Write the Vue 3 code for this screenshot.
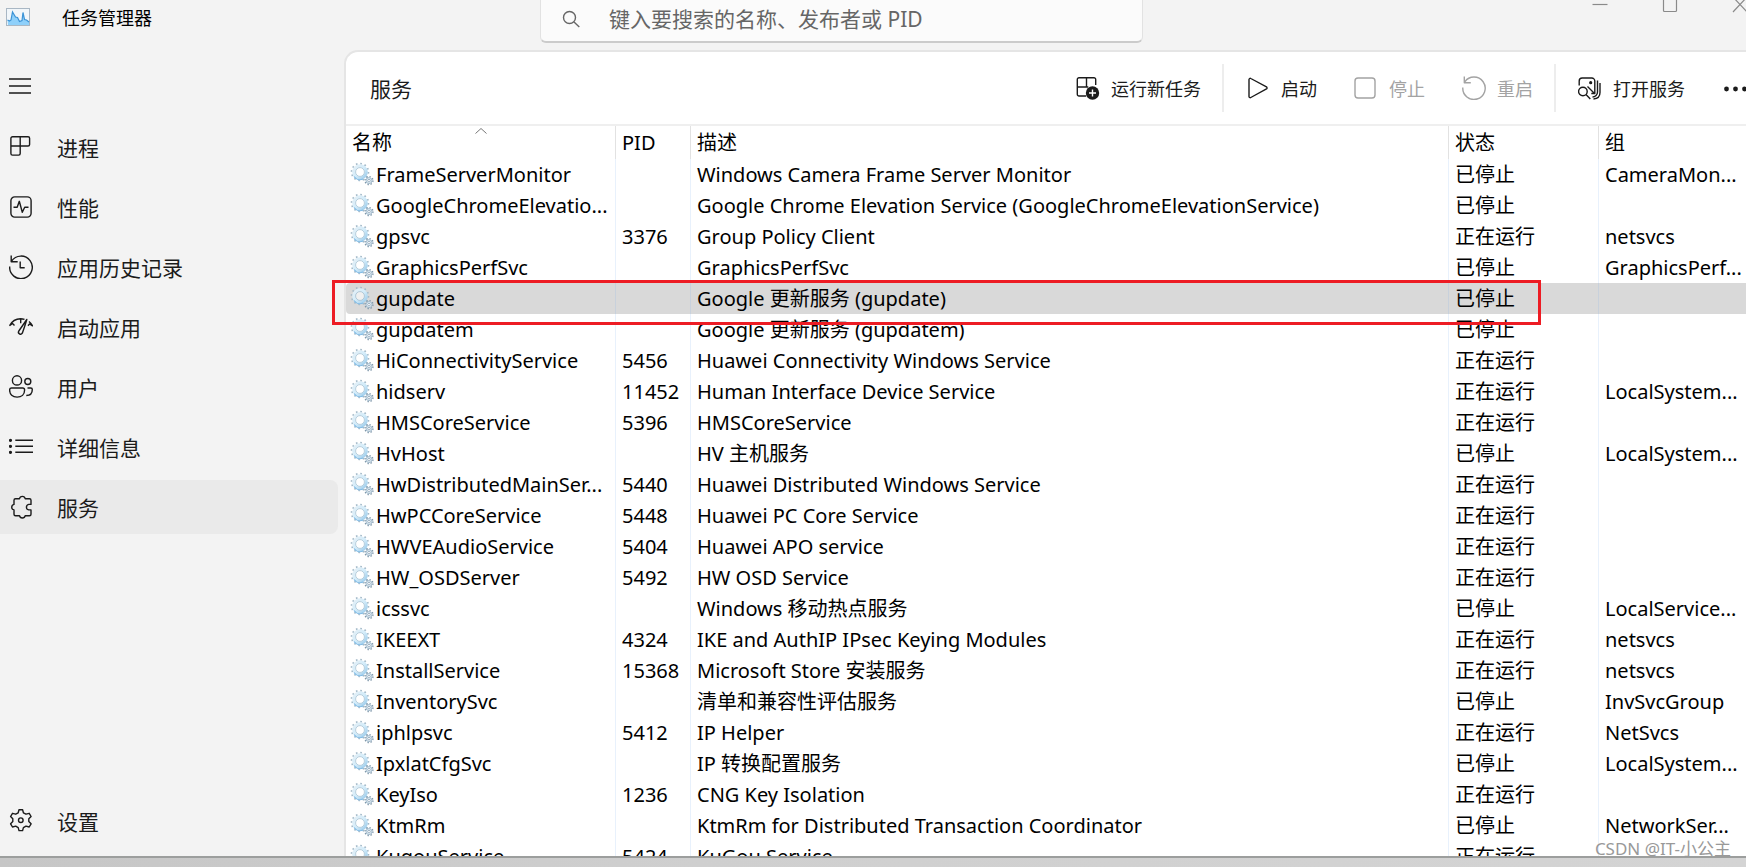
<script setup>
const navItems = [
  { id: 'process', label: '进程' },
  { id: 'perf', label: '性能' },
  { id: 'history', label: '应用历史记录' },
  { id: 'startup', label: '启动应用' },
  { id: 'users', label: '用户' },
  { id: 'details', label: '详细信息' },
  { id: 'services', label: '服务' },
]

const stopped = '已停止'
const running = '正在运行'
const services = [
  ['FrameServerMonitor', '', 'Windows Camera Frame Server Monitor', stopped, 'CameraMon...'],
  ['GoogleChromeElevatio...', '', 'Google Chrome Elevation Service (GoogleChromeElevationService)', stopped, ''],
  ['gpsvc', '3376', 'Group Policy Client', running, 'netsvcs'],
  ['GraphicsPerfSvc', '', 'GraphicsPerfSvc', stopped, 'GraphicsPerf...'],
  ['gupdate', '', 'Google 更新服务 (gupdate)', stopped, ''],
  ['gupdatem', '', 'Google 更新服务 (gupdatem)', stopped, ''],
  ['HiConnectivityService', '5456', 'Huawei Connectivity Windows Service', running, ''],
  ['hidserv', '11452', 'Human Interface Device Service', running, 'LocalSystem...'],
  ['HMSCoreService', '5396', 'HMSCoreService', running, ''],
  ['HvHost', '', 'HV 主机服务', stopped, 'LocalSystem...'],
  ['HwDistributedMainSer...', '5440', 'Huawei Distributed Windows Service', running, ''],
  ['HwPCCoreService', '5448', 'Huawei PC Core Service', running, ''],
  ['HWVEAudioService', '5404', 'Huawei APO service', running, ''],
  ['HW_OSDServer', '5492', 'HW OSD Service', running, ''],
  ['icssvc', '', 'Windows 移动热点服务', stopped, 'LocalService...'],
  ['IKEEXT', '4324', 'IKE and AuthIP IPsec Keying Modules', running, 'netsvcs'],
  ['InstallService', '15368', 'Microsoft Store 安装服务', running, 'netsvcs'],
  ['InventorySvc', '', '清单和兼容性评估服务', stopped, 'InvSvcGroup'],
  ['iphlpsvc', '5412', 'IP Helper', running, 'NetSvcs'],
  ['IpxlatCfgSvc', '', 'IP 转换配置服务', stopped, 'LocalSystem...'],
  ['KeyIso', '1236', 'CNG Key Isolation', running, ''],
  ['KtmRm', '', 'KtmRm for Distributed Transaction Coordinator', stopped, 'NetworkSer...'],
  ['KugouService', '5424', 'KuGou Service', running, ''],
]
</script>

<template>
  <div class="desktop">
    <svg class="sprite" aria-hidden="true">
      <defs>
        <linearGradient id="gearFill" x1="0" y1="0" x2="1" y2="1">
          <stop offset="0" stop-color="#e3eff6" />
          <stop offset="0.5" stop-color="#d3ecfa" />
          <stop offset="1" stop-color="#9ccbea" />
        </linearGradient>
      </defs>
      <symbol id="service" viewBox="0 0 24 24">
        <circle cx="10" cy="10" r="8.400" fill="none" stroke="#a3b9c8" stroke-width="1.800" stroke-dasharray="1.600 2.800" />
        <circle cx="10" cy="10" r="6.200" fill="none" stroke="url(#gearFill)" stroke-width="3.200" />
        <circle cx="10" cy="10" r="4.400" fill="#fff" fill-opacity="0.600" stroke="#9dbbcf" stroke-width="0.700" />
        <path d="M4 14.500a7.400 7.400 0 0 0 9 2.500" fill="none" stroke="#82bce6" stroke-width="1.200" />
        <circle cx="19" cy="18.600" r="4" fill="none" stroke="#8099ab" stroke-width="1.300" stroke-dasharray="1.400 1.740" />
        <circle cx="19" cy="18.600" r="3" fill="#e3eef5" stroke="#8fabc0" stroke-width="0.800" />
        <circle cx="19" cy="18.600" r="1.300" fill="#fff" stroke="#7f9bb0" stroke-width="0.700" />
      </symbol>
    </svg>

    <div class="window">
      <header class="titlebar">
        <div class="brand">
          <svg class="logo" viewBox="0 0 24 18">
            <rect x="0.5" y="0.5" width="23" height="17" fill="#f1f6fa" stroke="#a9b7c4" />
            <path d="M1.5 12l2 1 1.500-1 1.500-8 3 5 2 .5 2 4 2.500-1 1-8 1.500 7 2 .5 2.500 2v3h-21z" fill="#8fd0fa" />
            <path d="M1.500 12l2 1 1.500-1 1.500-8 3 5 2 .5 2 4 2.500-1 1-8 1.500 7 2 .5 2.500 2" fill="none" stroke="#3b93d6" stroke-width="1.200" />
          </svg>
          <h1>任务管理器</h1>
        </div>
        <label class="search">
          <svg class="icon" viewBox="0 0 24 24">
            <circle cx="8.500" cy="10.500" r="6" />
            <path d="M13 15l5.300 5" />
          </svg>
          <input type="text" aria-label="搜索" placeholder="键入要搜索的名称、发布者或 PID" />
        </label>
        <div class="controls">
          <button aria-label="最小化"><svg viewBox="0 0 16 14"><path d="M0.500 4.500h15" /></svg></button>
          <button aria-label="最大化"><svg viewBox="0 0 16 14"><rect x="1.500" y="-3.500" width="13" height="15" rx="1" /></svg></button>
          <button aria-label="关闭"><svg viewBox="0 0 16 14"><path d="M1 12L15-3M15 12L1-3" /></svg></button>
        </div>
      </header>

      <div class="body">
        <aside class="sidebar">
          <button class="nav-item" aria-label="菜单">
            <svg class="icon" viewBox="0 0 24 24"><path d="M0 4h22M0 11h22M0 18h22" /></svg>
          </button>
          <nav>
            <button v-for="item in navItems" :key="item.id" class="nav-item" :class="{ active: item.id === 'services' }">
              <svg class="icon" viewBox="0 0 24 24">
                <g v-if="item.id === 'process'">
                  <path d="M3.500 1.700h15.600a1.500 1.500 0 0 1 1.500 1.500v6.300a1.500 1.500 0 0 1-1.500 1.500H1.900M3.500 1.700a1.600 1.600 0 0 0-1.600 1.600v15.200a1.600 1.600 0 0 0 1.600 1.600h6.200a1.500 1.500 0 0 0 1.500-1.500V1.700" />
                </g>
                <g v-else-if="item.id === 'perf'">
                  <rect x="1.900" y="1.900" width="20.200" height="20.200" rx="3.800" />
                  <path d="M4.500 12.300h3.700l2.100-6 3 11 2.400-5H19.500" />
                </g>
                <g v-else-if="item.id === 'history'">
                  <path d="M.7 11.500A11.300 11.300 0 1 0 2.500 6.200M2.200.5v6.300h6.500M11.200 6.500v6.200h4.500" />
                </g>
                <g v-else-if="item.id === 'startup'">
                  <path d="M.5 10.800C3 6 7 3.700 11.500 3.700q2 0 4 .7M.5 10.800l3-2.300 2 2M11.700 3.700v4.500M20 6.500q2.200 1.800 3.500 4.300l-3-1.800-1.500 1.700" />
                  <path d="M17.800 4.500l-8 11.500a2 2 0 0 0 3.500 2.200q2.200-6 4.500-13.700z" />
                </g>
                <g v-else-if="item.id === 'users'">
                  <circle cx="8" cy="5.400" r="4.600" />
                  <circle cx="18.800" cy="6.500" r="3" />
                  <path d="M2.500 13h11.200a1.900 1.900 0 0 1 1.900 1.900c0 4.500-3 7.200-7.500 7.200S.6 19.400.6 14.900A1.900 1.900 0 0 1 2.500 13zM18.500 13h3.300a1.500 1.500 0 0 1 1.500 1.500c0 4-2.200 6-6 6" />
                </g>
                <g v-else-if="item.id === 'details'">
                  <path d="M6.300 5.300H24M6.300 11.300H24M6.300 17.300H24" />
                  <circle cx="1.500" cy="5.300" r="0.900" class="solid" />
                  <circle cx="1.500" cy="11.300" r="0.900" class="solid" />
                  <circle cx="1.500" cy="17.300" r="0.900" class="solid" />
                </g>
                <g v-else>
                  <path d="M6.500 3.700h4a2.900 2.900 0 0 1 5.700 0h4.300a1.500 1.500 0 0 1 1.500 1.500v4.200h-2.300a2.800 2.800 0 0 0 0 5.500h2.300v4.300a1.500 1.500 0 0 1-1.500 1.500h-4.300a2.900 2.900 0 0 1-5.700 0h-4a1.500 1.500 0 0 1-1.500-1.500v-4.300a2.800 2.800 0 0 1 0-5.500V5.200a1.500 1.500 0 0 1 1.500-1.500z" />
                </g>
              </svg>
              <span>{{ item.label }}</span>
            </button>
          </nav>
          <button class="nav-item settings">
            <svg class="icon" viewBox="0 0 24 24">
              <path d="M10 .8h3.600l.8 3 2.600 1.400 3.200-.9 1.900 3.200-2.300 2.300v2.700l2.300 2.300-1.900 3.200-3.200-.9-2.600 1.500-.8 3H10l-.8-3-2.500-1.500-3.200.9-1.900-3.200 2.200-2.300V9.800L1.600 7.500l1.900-3.200 3.200.9 2.500-1.400z" />
              <circle cx="11.800" cy="11.200" r="2.300" />
            </svg>
            <span>设置</span>
          </button>
        </aside>

        <main class="panel">
          <div class="toolbar">
            <h2>服务</h2>
            <button>
              <svg class="icon" viewBox="0 0 24 24">
                <path d="M10 20H3a1.700 1.700 0 0 1-1.700-1.700V3.500A1.700 1.700 0 0 1 3 1.800h15a1.700 1.700 0 0 1 1.700 1.700V9M10.500 1.800V11M1.300 11h11" />
                <circle cx="16.500" cy="17" r="6.700" class="solid bare" />
                <path d="M16.500 13.500v7M13 17h7" class="light" />
              </svg>
              <span>运行新任务</span>
            </button>
            <i class="divider"></i>
            <button>
              <svg class="icon" viewBox="0 0 24 24"><path d="M3 3.500v17a1.200 1.200 0 0 0 1.800 1l15.700-8.600a1.200 1.200 0 0 0 0-2L4.800 2.500A1.200 1.200 0 0 0 3 3.500z" /></svg>
              <span>启动</span>
            </button>
            <button disabled>
              <svg class="icon" viewBox="0 0 24 24"><rect x="1" y="2" width="20" height="20" rx="3" /></svg>
              <span>停止</span>
            </button>
            <button disabled>
              <svg class="icon" viewBox="0 0 24 24"><path d="M.8 11.500A11.200 11.200 0 1 0 2.800 5.800M2.300.5v6.300h6.500" /></svg>
              <span>重启</span>
            </button>
            <i class="divider"></i>
            <button>
              <svg class="icon" viewBox="0 0 24 24">
                <path d="M1.200 9.500V5a3 3 0 0 1 3-3h9.600a3 3 0 0 1 3 3v11.500M9.500 10.500l7 7M16.800 14v3.500h-3.500M19.500 4.500v11.500a5 5 0 0 1-5 5M22 7v9.500q0 6-6.500 6.500M8 18.500l4.300 4.500" />
                <circle cx="4.900" cy="15.500" r="4.300" />
                <circle cx="12.700" cy="6.700" r="0.900" class="solid" />
              </svg>
              <span>打开服务</span>
            </button>
            <button class="more" aria-label="更多">
              <svg class="icon" viewBox="0 0 24 24">
                <circle cx="4.500" cy="13" r="2.400" class="solid bare" />
                <circle cx="13.500" cy="13" r="2.400" class="solid bare" />
                <circle cx="22.500" cy="13" r="2.400" class="solid bare" />
              </svg>
            </button>
          </div>

          <div class="list">
            <table>
              <colgroup>
                <col class="c-name" /><col class="c-pid" /><col /><col class="c-status" /><col class="c-group" />
              </colgroup>
              <thead>
                <tr>
                  <th>
                    名称
                    <svg class="sort" viewBox="0 0 12 6"><path d="M0.500 5.500L6 0.500l5.500 5" /></svg>
                  </th>
                  <th>PID</th>
                  <th>描述</th>
                  <th>状态</th>
                  <th>组</th>
                </tr>
              </thead>
              <tbody>
                <tr v-for="row in services" :key="row[0]" :class="{ selected: row[0] === 'gupdate' }">
                  <td class="name"><div><svg class="gear"><use href="#service" /></svg><span>{{ row[0] }}</span></div></td>
                  <td>{{ row[1] }}</td>
                  <td>{{ row[2] }}</td>
                  <td>{{ row[3] }}</td>
                  <td>{{ row[4] }}</td>
                </tr>
              </tbody>
            </table>
          </div>
        </main>
      </div>
      <div class="highlight"></div>
    </div>
    <div class="taskstrip"></div>
    <div class="watermark">CSDN @IT-小公主</div>
  </div>
</template>

<style>
body {
  margin: 0;
  overflow: hidden;
}
</style>

<style scoped>
.desktop {
  position: relative;
  display: flex;
  flex-direction: column;
  height: 100vh;
  overflow: hidden;
  font-family: "Noto Sans", "Noto Sans CJK SC", sans-serif;
  color: #1b1b1b;
}
.sprite {
  position: absolute;
  width: 0;
  height: 0;
}
.window {
  position: relative;
  flex: 1;
  min-height: 0;
  display: flex;
  flex-direction: column;
  overflow: hidden;
  background: #f3f3f3;
}
button {
  border: 0;
  padding: 0;
  background: none;
  font: inherit;
  color: inherit;
}
.icon {
  flex: none;
  width: 24px;
  height: 24px;
  fill: none;
  stroke: currentColor;
  stroke-width: 1.4;
  stroke-linejoin: round;
}
.solid {
  fill: currentColor;
}
.bare {
  stroke: none;
}
.light {
  stroke: #fff;
}

.titlebar {
  flex: none;
  display: grid;
  grid-template-columns: 540px minmax(0, 603px) 1fr;
  height: 50px;
}
.brand {
  display: flex;
  align-items: center;
  gap: 32px;
  height: 34px;
  padding-left: 6px;
}
.logo {
  width: 24px;
  height: 18px;
}
h1 {
  margin: 0;
  font-size: 18px;
  font-weight: 400;
  color: #000;
}
.search {
  display: flex;
  align-items: center;
  gap: 24px;
  box-sizing: border-box;
  height: 43px;
  padding: 0 20px 4px;
  border: 1px solid #e2e2e2;
  border-top: 0;
  border-bottom: 2px solid #cbcbcb;
  border-radius: 0 0 6px 6px;
  background: #fbfbfb;
  color: #666;
}
.search input {
  flex: 1;
  min-width: 0;
  padding: 0;
  border: 0;
  outline: 0;
  background: none;
  font: inherit;
  font-size: 21px;
}
.search input::placeholder {
  color: #666;
  opacity: 1;
}
.controls {
  display: flex;
  justify-content: flex-end;
  align-items: flex-start;
  overflow: hidden;
}
.controls button {
  width: 70px;
  height: 14px;
  text-align: center;
}
.controls button:last-child {
  width: 41px;
  overflow: hidden;
  text-align: left;
  padding-left: 27px;
}
.controls svg {
  display: inline-block;
  vertical-align: top;
  width: 16px;
  height: 14px;
  fill: none;
  stroke: #8a8a8a;
  stroke-width: 1.2;
}

.body {
  flex: 1;
  min-height: 0;
  display: flex;
}
.sidebar {
  flex: none;
  display: flex;
  flex-direction: column;
  gap: 6px;
  box-sizing: border-box;
  width: 344px;
  padding: 10px 6px 8px 0;
}
nav {
  display: flex;
  flex-direction: column;
  gap: 6px;
}
.nav-item {
  display: flex;
  align-items: center;
  gap: 24px;
  width: 100%;
  height: 54px;
  padding-left: 9px;
  border-radius: 0 8px 8px 0;
  font-size: 21px;
  text-align: left;
}
.nav-item.active {
  background: #eaeaea;
}
.settings {
  margin-top: auto;
}

.panel {
  flex: 1;
  min-width: 0;
  display: flex;
  flex-direction: column;
  overflow: hidden;
  border-top: 2px solid #e5e5e5;
  border-left: 2px solid #e5e5e5;
  border-radius: 14px 0 0 0;
  background: #fff;
}
.toolbar {
  flex: none;
  display: flex;
  align-items: center;
  height: 72px;
  border-bottom: 2px solid #efefef;
}
h2 {
  margin: 0 auto 0 24px;
  font-size: 21px;
  font-weight: 400;
}
.toolbar button {
  display: flex;
  align-items: center;
  gap: 11px;
  height: 48px;
  padding: 0 19px 0 18px;
  font-size: 18px;
  white-space: nowrap;
}
.toolbar button:disabled {
  color: #a3a3a3;
}
.toolbar .more {
  padding-right: 0;
}
.divider {
  flex: none;
  width: 2px;
  height: 48px;
  margin: 0 4px 0 2px;
  background: #ededed;
}

.list {
  flex: 1;
  min-height: 0;
  overflow: hidden;
}
table {
  width: 100%;
  table-layout: fixed;
  border-collapse: separate;
  border-spacing: 0;
  font-size: 20px;
  color: #000;
}
.c-name { width: 270px; }
.c-pid { width: 75px; }
.c-status { width: 150px; }
.c-group { width: 147px; }
th,
td {
  box-sizing: border-box;
  height: 31px;
  padding: 0 0 0 6px;
  border-right: 1px solid #e8f1fc;
  line-height: 30px;
  font-weight: 400;
  text-align: left;
  white-space: nowrap;
}
th {
  position: relative;
  height: 33px;
  border-color: #e2e2e2;
}
th:last-child,
td:last-child {
  border-right: 0;
}
td.name {
  padding-left: 4px;
}
.name div {
  display: flex;
  align-items: center;
  gap: 2px;
}
.gear {
  flex: none;
  width: 24px;
  height: 24px;
  margin-bottom: 2px;
}
.sort {
  position: absolute;
  top: 2px;
  left: 50%;
  width: 12px;
  height: 6px;
  margin-left: -6px;
  fill: none;
  stroke: #777;
}
.selected td {
  background: #d9d9d9;
  border-color: #c8d1dc;
}
.selected td:first-child {
  border-radius: 4px 0 0 4px;
}

.highlight {
  position: absolute;
  top: 280px;
  left: 332px;
  right: 205px;
  box-sizing: border-box;
  height: 45px;
  border: 3px solid #ed1c24;
}
.taskstrip {
  flex: none;
  box-sizing: border-box;
  height: 11px;
  border-top: 2px solid #9c9e9d;
  background: linear-gradient(90deg, #c6c6c6, #cfcfcf 40%, #d4d4d4);
}
.watermark {
  position: absolute;
  right: 15px;
  bottom: 6px;
  font-size: 17px;
  line-height: 24px;
  color: #999;
}
</style>
